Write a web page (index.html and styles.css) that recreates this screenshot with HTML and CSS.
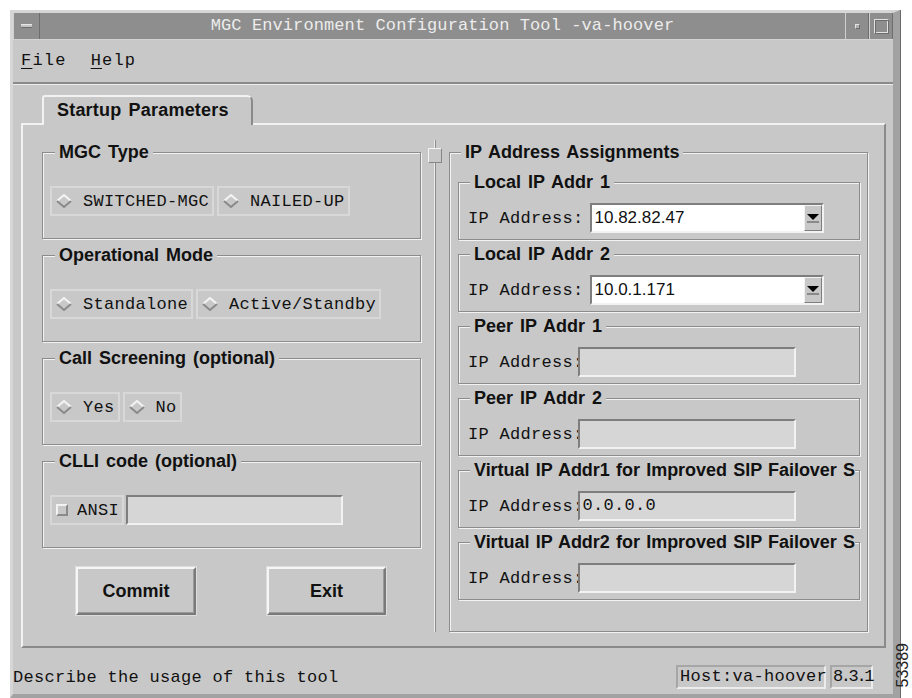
FILE: index.html
```html
<!DOCTYPE html>
<html lang="en">
<head>
<meta charset="utf-8">
<title>MGC Environment Configuration Tool</title>
<link rel="stylesheet" href="styles.css">
</head>
<body>
<div class="window">
  <div class="titlebar">
    <div class="wm-btn wm-menu"><span class="wm-bar"></span></div>
    <div class="wm-title">MGC Environment Configuration Tool -va-hoover</div>
    <div class="wm-btn wm-min"><span class="wm-dot"></span></div>
    <div class="wm-btn wm-max"><span class="wm-box"></span></div>
  </div>

  <div class="menubar">
    <span class="menu-item"><u>F</u>ile</span>
    <span class="menu-item"><u>H</u>elp</span>
  </div>

  <div class="tabarea">
    <div class="tabs"><div class="tab">Startup Parameters</div></div>
    <div class="panel">
      <div class="col-left">
        <div class="group">
          <div class="group-title">MGC Type</div>
          <div class="choices">
            <div class="choice"><svg class="diamond" viewBox="0 0 16 14"><polygon points="8,1 15,7 8,13 1,7" fill="#c8c8c8"/><polyline points="1,7 8,1 15,7" fill="none" stroke="#f4f4f4" stroke-width="2"/><polyline points="1,7 8,13 15,7" fill="none" stroke="#8a8a8a" stroke-width="2"/></svg><span>SWITCHED-MGC</span></div>
            <div class="choice"><svg class="diamond" viewBox="0 0 16 14"><polygon points="8,1 15,7 8,13 1,7" fill="#c8c8c8"/><polyline points="1,7 8,1 15,7" fill="none" stroke="#f4f4f4" stroke-width="2"/><polyline points="1,7 8,13 15,7" fill="none" stroke="#8a8a8a" stroke-width="2"/></svg><span>NAILED-UP</span></div>
          </div>
        </div>

        <div class="group">
          <div class="group-title">Operational Mode</div>
          <div class="choices">
            <div class="choice"><svg class="diamond" viewBox="0 0 16 14"><polygon points="8,1 15,7 8,13 1,7" fill="#c8c8c8"/><polyline points="1,7 8,1 15,7" fill="none" stroke="#f4f4f4" stroke-width="2"/><polyline points="1,7 8,13 15,7" fill="none" stroke="#8a8a8a" stroke-width="2"/></svg><span>Standalone</span></div>
            <div class="choice"><svg class="diamond" viewBox="0 0 16 14"><polygon points="8,1 15,7 8,13 1,7" fill="#c8c8c8"/><polyline points="1,7 8,1 15,7" fill="none" stroke="#f4f4f4" stroke-width="2"/><polyline points="1,7 8,13 15,7" fill="none" stroke="#8a8a8a" stroke-width="2"/></svg><span>Active/Standby</span></div>
          </div>
        </div>

        <div class="group">
          <div class="group-title">Call Screening (optional)</div>
          <div class="choices">
            <div class="choice"><svg class="diamond" viewBox="0 0 16 14"><polygon points="8,1 15,7 8,13 1,7" fill="#c8c8c8"/><polyline points="1,7 8,1 15,7" fill="none" stroke="#f4f4f4" stroke-width="2"/><polyline points="1,7 8,13 15,7" fill="none" stroke="#8a8a8a" stroke-width="2"/></svg><span>Yes</span></div>
            <div class="choice"><svg class="diamond" viewBox="0 0 16 14"><polygon points="8,1 15,7 8,13 1,7" fill="#c8c8c8"/><polyline points="1,7 8,1 15,7" fill="none" stroke="#f4f4f4" stroke-width="2"/><polyline points="1,7 8,13 15,7" fill="none" stroke="#8a8a8a" stroke-width="2"/></svg><span>No</span></div>
          </div>
        </div>

        <div class="group">
          <div class="group-title">CLLI code (optional)</div>
          <div class="choices">
            <div class="choice check"><span class="checkbox"></span><span>ANSI</span></div>
            <div class="field clli"></div>
          </div>
        </div>

        <div class="actions">
          <button class="btn commit">Commit</button>
          <button class="btn exit">Exit</button>
        </div>
      </div>

      <div class="splitter">
        <div class="sash-line top"></div>
        <div class="sash"></div>
        <div class="sash-line rest"></div>
      </div>

      <div class="col-right">
        <div class="group outer">
          <div class="group-title">IP Address Assignments</div>

          <div class="group inner">
            <div class="group-title">Local IP Addr 1</div>
            <div class="ip-row">
              <span class="ip-label">IP Address:</span>
              <div class="combo"><span class="combo-value">10.82.82.47</span><span class="combo-arrow"><svg viewBox="0 0 12 10" width="12" height="10"><polygon points="0,1 12,1 6,7" fill="#000"/><rect x="0" y="8" width="12" height="2" fill="#8a8a8a"/></svg></span></div>
            </div>
          </div>

          <div class="group inner">
            <div class="group-title">Local IP Addr 2</div>
            <div class="ip-row">
              <span class="ip-label">IP Address:</span>
              <div class="combo"><span class="combo-value">10.0.1.171</span><span class="combo-arrow"><svg viewBox="0 0 12 10" width="12" height="10"><polygon points="0,1 12,1 6,7" fill="#000"/><rect x="0" y="8" width="12" height="2" fill="#8a8a8a"/></svg></span></div>
            </div>
          </div>

          <div class="group inner">
            <div class="group-title">Peer IP Addr 1</div>
            <div class="ip-row">
              <span class="ip-label">IP Address:</span>
              <div class="field ip"></div>
            </div>
          </div>

          <div class="group inner">
            <div class="group-title">Peer IP Addr 2</div>
            <div class="ip-row">
              <span class="ip-label">IP Address:</span>
              <div class="field ip"></div>
            </div>
          </div>

          <div class="group inner">
            <div class="group-title long">Virtual IP Addr1 for Improved SIP Failover S</div>
            <div class="ip-row">
              <span class="ip-label">IP Address:</span>
              <div class="field ip">0.0.0.0</div>
            </div>
          </div>

          <div class="group inner">
            <div class="group-title long">Virtual IP Addr2 for Improved SIP Failover S</div>
            <div class="ip-row">
              <span class="ip-label">IP Address:</span>
              <div class="field ip"></div>
            </div>
          </div>
        </div>
      </div>
    </div>
  </div>

  <div class="statusbar">
    <span class="status-text">Describe the usage of this tool</span>
    <span class="status-cell host">Host:va-hoover</span>
    <span class="status-cell version">8.3.1</span>
  </div>
</div>
<div class="fig-number">53389</div>
</body>
</html>
```

FILE: styles.css
```css
* {
  box-sizing: border-box;
}

html,
body {
  margin: 0;
  background: #ffffff;
}

body {
  position: relative;
  width: 912px;
  height: 698px;
  overflow: hidden;
  font-family: "Liberation Mono", "DejaVu Sans Mono", monospace;
  font-size: 17px;
  letter-spacing: 0.3px;
  color: #111111;
}

/* ---------- window frame ---------- */
.window {
  margin: 10px 0 0 10px;
  width: 890px;
  height: 688px;
  display: flex;
  flex-direction: column;
  background: #c8c8c8;
  border-style: solid;
  border-width: 3px 7px 4px 3px;
  border-color: #d6d6d6 #a2a2a2 #a2a2a2 #d6d6d6;
  box-shadow: 1px 0 0 #6a6a6a;
}

.titlebar {
  flex: none;
  height: 27px;
  display: flex;
  background: #8e8e8e;
  border-bottom: 1px solid #d4d4d4;
}

.wm-btn {
  flex: none;
  display: flex;
  align-items: center;
  justify-content: center;
  border-left: 1px solid #d0d0d0;
  border-right: 1px solid #6e6e6e;
}

.wm-menu {
  width: 27px;
}

.wm-min {
  width: 24px;
}

.wm-max {
  width: 24px;
}

.wm-bar {
  width: 11px;
  height: 4px;
  background: #c4c4c4;
  border-top: 1px solid #e6e6e6;
  border-bottom: 1px solid #6c6c6c;
}

.wm-dot {
  width: 5px;
  height: 5px;
  background: #b0b0b0;
  border-top: 1px solid #e2e2e2;
  border-left: 1px solid #e2e2e2;
  border-right: 1px solid #6c6c6c;
  border-bottom: 1px solid #6c6c6c;
}

.wm-box {
  width: 15px;
  height: 15px;
  border-top: 1px solid #e2e2e2;
  border-left: 1px solid #e2e2e2;
  border-right: 1px solid #6c6c6c;
  border-bottom: 1px solid #6c6c6c;
  box-shadow: inset 1px 1px 0 #6c6c6c, inset -1px -1px 0 #e2e2e2;
}

.wm-title {
  flex: 1;
  text-align: center;
  color: #ececec;
  line-height: 25px;
  letter-spacing: 0.1px;
  white-space: nowrap;
}

/* ---------- menu bar ---------- */
.menubar {
  flex: none;
  height: 44px;
  display: flex;
  align-items: center;
  gap: 24px;
  padding: 0 0 2px 8px;
  border-bottom: 2px solid #8a8a8a;
}

.menu-item {
  letter-spacing: 1.2px;
}

.menu-item u {
  text-underline-offset: 3px;
}

/* ---------- tab area ---------- */
.tabarea {
  flex: 1;
  display: flex;
  flex-direction: column;
  padding: 10px 7px 0 8px;
  border-top: 1px solid #ececec;
}

.tabs {
  flex: none;
  display: flex;
  height: 28px;
}

.tab {
  position: relative;
  z-index: 1;
  margin-left: 21px;
  width: 211px;
  height: 30px;
  padding: 3px 0 0 13px;
  background: #c8c8c8;
  border-top: 2px solid #f2f2f2;
  border-left: 2px solid #f2f2f2;
  border-right: 2px solid #8a8a8a;
  border-radius: 3px 6px 0 0;
  font: bold 18px/20px "Liberation Sans", Arial, sans-serif;
  letter-spacing: 0.2px;
  word-spacing: 2px;
  color: #111111;
}

.panel {
  flex: 1;
  display: flex;
  align-items: stretch;
  padding: 15px 16px 14px 19px;
  border: 2px solid;
  border-color: #f2f2f2 #8a8a8a #8a8a8a #f2f2f2;
}

/* ---------- group boxes ---------- */
.group {
  border: 1px solid #8c8c8c;
  box-shadow: inset 1px 1px 0 #f2f2f2, 1px 1px 0 #f2f2f2;
}

.group-title {
  width: max-content;
  margin: -11px 0 0 11px;
  padding: 0 4px;
  background: #c8c8c8;
  font: bold 18px/20px "Liberation Sans", Arial, sans-serif;
  letter-spacing: 0;
  word-spacing: 2px;
  color: #111111;
  white-space: nowrap;
}

.col-left {
  flex: none;
  width: 379px;
  display: flex;
  flex-direction: column;
  gap: 16px;
  padding-top: 12px;
}

.col-left .group {
  padding: 0 0 22px 7px;
}

.col-left .group-title {
  margin-left: 5px;
}

.choices {
  display: flex;
  gap: 3px;
  height: 30px;
  margin-top: 24px;
}

.choice {
  display: flex;
  align-items: center;
  gap: 11px;
  padding: 0 3px 0 4px;
  border: 2px solid #d8d8d8;
  white-space: nowrap;
}

.diamond {
  width: 16px;
  height: 14px;
  flex: none;
}

.choice.check {
  gap: 9px;
}

.checkbox {
  width: 12px;
  height: 12px;
  flex: none;
  border: 2px solid;
  border-color: #f2f2f2 #8a8a8a #8a8a8a #f2f2f2;
}

.field {
  height: 30px;
  padding: 0 3px;
  background: #d6d6d6;
  border: 2px solid;
  border-color: #7e7e7e #f2f2f2 #f2f2f2 #7e7e7e;
  line-height: 26px;
  white-space: nowrap;
}

.field.clli {
  width: 217px;
  margin-left: -1px;
}

.actions {
  display: flex;
  gap: 71px;
  padding-left: 34px;
  margin-top: 3px;
}

.btn {
  height: 48px;
  padding: 0;
  background: #c8c8c8;
  border: 2px solid;
  border-color: #f6f6f6 #7a7a7a #7a7a7a #f6f6f6;
  box-shadow: inset -1px -1px 0 #9a9a9a, 0 0 0 1px #dcdcdc;
  font: bold 18px "Liberation Sans", Arial, sans-serif;
  color: #111111;
}

.btn.commit {
  width: 120px;
}

.btn.exit {
  width: 119px;
}

/* ---------- splitter ---------- */
.splitter {
  flex: none;
  width: 28px;
  display: flex;
  flex-direction: column;
  align-items: center;
}

.sash-line {
  width: 2px;
  border-left: 1px solid #ececec;
  border-right: 1px solid #8c8c8c;
}

.sash-line.top {
  height: 8px;
}

.sash-line.rest {
  flex: 1;
}

.sash {
  width: 14px;
  height: 15px;
  flex: none;
  background: #c8c8c8;
  border: 1px solid;
  border-color: #f4f4f4 #868686 #868686 #f4f4f4;
}

/* ---------- right column ---------- */
.col-right {
  flex: none;
  width: 419px;
  display: flex;
  flex-direction: column;
  padding-top: 12px;
}

.group.outer {
  flex: 1;
  display: flex;
  flex-direction: column;
  gap: 14px;
  padding: 0 7px 0 8px;
}

.group.outer > .group-title {
  margin-left: 3px;
  margin-bottom: 6px;
}

.group.inner {
  height: 58px;
  flex: none;
}

/* long captions run right up to the frame's right edge */
.group-title.long {
  padding-right: 0;
  word-spacing: 1.4px;
  letter-spacing: -0.05px;
}

.ip-row {
  display: flex;
  align-items: center;
  height: 30px;
  margin-top: 11px;
  padding-left: 9px;
}

.ip-label {
  white-space: nowrap;
}

.combo {
  display: flex;
  width: 234px;
  height: 30px;
  margin-left: 6px;
  background: #ffffff;
  border: 2px solid;
  border-color: #7e7e7e #f2f2f2 #f2f2f2 #7e7e7e;
}

.combo-value {
  flex: 1;
  padding-left: 3px;
  font: 17px/26px "Liberation Sans", Arial, sans-serif;
  letter-spacing: 0;
  color: #111111;
}

.combo-arrow {
  width: 18px;
  flex: none;
  display: flex;
  align-items: center;
  justify-content: center;
  background: #c8c8c8;
  border: 1px solid;
  border-color: #f2f2f2 #7e7e7e #7e7e7e #f2f2f2;
}

.field.ip {
  width: 218px;
  margin-left: -6px;
}

/* ---------- status bar ---------- */
.statusbar {
  flex: none;
  height: 46px;
  display: flex;
  align-items: center;
  gap: 4px;
  padding: 12px 20px 0 0;
}

.status-text {
  flex: 1;
  white-space: nowrap;
}

.status-cell {
  flex: none;
  height: 24px;
  padding: 0 2px;
  line-height: 20px;
  border: 2px solid;
  border-color: #a6a6a6 #ececec #ececec #a6a6a6;
  white-space: nowrap;
}

.status-cell.host {
  width: 150px;
}

.status-cell.version {
  width: 43px;
  padding: 0 1px;
  letter-spacing: -2.4px;
}

/* figure reference printed along the margin */
.fig-number {
  position: absolute;
  left: 896px;
  top: 643px;
  writing-mode: vertical-rl;
  transform: rotate(180deg);
  font: 16px/14px "Liberation Sans", Arial, sans-serif;
  letter-spacing: 0;
  color: #222222;
}
```
